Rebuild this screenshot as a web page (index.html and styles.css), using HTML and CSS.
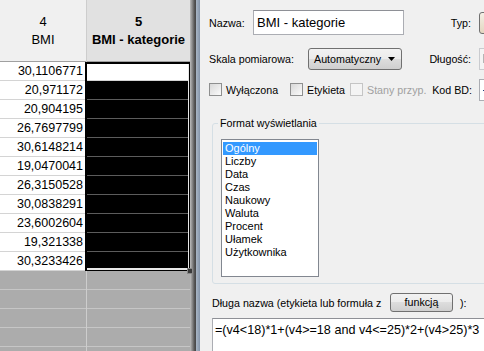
FILE: index.html
```html
<!DOCTYPE html>
<html lang="pl">
<head>
  <meta charset="UTF-8" />
  <meta name="viewport" content="width=device-width, initial-scale=1.0" />
  <title>Edytor zmiennych</title>
  <link rel="stylesheet" href="styles.css">
</head>
<body>
  <div class="app">
    <div class="sheet">
      <div class="col col-values">
        <div class="head"><span>4</span><span>BMI</span></div>
        <div class="cell">30,1106771</div>
        <div class="cell">20,971172</div>
        <div class="cell">20,904195</div>
        <div class="cell">26,7697799</div>
        <div class="cell">30,6148214</div>
        <div class="cell">19,0470041</div>
        <div class="cell">26,3150528</div>
        <div class="cell">30,0838291</div>
        <div class="cell">23,6002604</div>
        <div class="cell">19,321338</div>
        <div class="cell">30,3233426</div>
        <div class="cell empty"></div>
        <div class="cell empty"></div>
        <div class="cell empty"></div>
        <div class="cell empty"></div>
      </div>
      <div class="col col-sel">
        <div class="head head-active"><span>5</span><span>BMI - kategorie</span></div>
        <div class="selection">
          <div class="cell current"></div>
          <div class="cell dark"></div>
          <div class="cell dark"></div>
          <div class="cell dark"></div>
          <div class="cell dark"></div>
          <div class="cell dark"></div>
          <div class="cell dark"></div>
          <div class="cell dark"></div>
          <div class="cell dark"></div>
          <div class="cell dark"></div>
          <div class="cell dark"></div>
          <span class="handle"></span>
        </div>
        <div class="cell empty"></div>
        <div class="cell empty"></div>
        <div class="cell empty"></div>
        <div class="cell empty"></div>
      </div>
    </div>
    <div class="split"></div>

    <div class="dialog">
      <div class="row row-name">
        <span class="label label-name">Nazwa:</span>
        <div class="text-input">BMI - kategorie</div>
        <span class="label label-side">Typ:</span>
        <div class="side-box side-combo"></div>
      </div>

      <div class="row row-scale">
        <span class="label label-scale">Skala pomiarowa:</span>
        <div class="select">
          <span>Automatyczny</span>
          <svg width="7" height="4" viewBox="0 0 7 4"><path d="M0 0h7L3.5 4z" fill="#000"/></svg>
        </div>
        <span class="label label-side label-length">Długość:</span>
        <div class="side-box side-disabled"><i class="mark mark-grey"></i></div>
      </div>

      <div class="row row-checks">
        <label class="check check-off"><span class="box"></span>Wyłączona</label>
        <label class="check check-label"><span class="box"></span>Etykieta</label>
        <label class="check check-states disabled"><span class="box"></span>Stany przyp.</label>
        <span class="label label-code">Kod BD:</span>
        <div class="side-box side-text"><i class="mark mark-dash"></i></div>
      </div>

      <fieldset class="group">
        <legend>Format wyświetlania</legend>
        <ul class="listbox">
          <li class="selected">Ogólny</li>
          <li>Liczby</li>
          <li>Data</li>
          <li>Czas</li>
          <li>Naukowy</li>
          <li>Waluta</li>
          <li>Procent</li>
          <li>Ułamek</li>
          <li>Użytkownika</li>
        </ul>
      </fieldset>

      <div class="row row-long">
        <span class="label label-long">Długa nazwa (etykieta lub formuła z</span>
        <div class="btn">funkcją</div>
        <span class="label label-close">):</span>
      </div>

      <div class="formula">=(v4&lt;18)*1+(v4&gt;=18 and v4&lt;=25)*2+(v4&gt;25)*3</div>
    </div>
  </div>
</body>
</html>
```

FILE: styles.css
```css
* {
  box-sizing: border-box;
}
body {
  margin: 0;
  font-family: 'Liberation Sans', Arial, sans-serif;
  background-color: #f0f0f0;
  color: #000;
}
.app {
  display: flex;
  height: 351px;
  overflow: hidden;
}

/* arkusz danych */
.sheet {
  display: flex;
  width: 190px;
  flex-shrink: 0;
  background-color: #acacac;
}
.col-values {
  width: 87px;
  border-right: 1px solid #cdcdcd;
}
.col-sel {
  flex: 1;
}
.head {
  height: 62px;
  display: flex;
  flex-direction: column;
  justify-content: center;
  align-items: center;
  font-size: 13px;
  line-height: 18px;
  background-color: #f0f0f0;
  border-bottom: 1px solid #a0a0a0;
}
.head-active {
  background-color: #e1e1e1;
  font-weight: bold;
}
.cell {
  height: 19px;
  line-height: 18px;
  font-size: 12.5px;
  text-align: right;
  padding-right: 3px;
  background-color: #fff;
  border-bottom: 1px solid #d4d4d4;
}
.cell.empty {
  background-color: #acacac;
  border-bottom-color: #c6c6c6;
}
.selection {
  position: relative;
}
.selection::after {
  content: "";
  position: absolute;
  top: 0;
  right: 0;
  bottom: 0;
  left: -2px;
  border: 2px solid #000;
  border-right-width: 1px;
  border-bottom-width: 1px;
  box-shadow: inset -1px -2px 0 #e8e8e8;
}
.cell.dark {
  background-color: #000;
  border-bottom-color: #5c5c5c;
}
.handle {
  position: absolute;
  right: -3px;
  bottom: -3px;
  width: 6px;
  height: 6px;
  background-color: #3a3a3a;
  border: 1px solid #888;
  z-index: 1;
}
.split {
  width: 10px;
  flex-shrink: 0;
  background: linear-gradient(to right, #bdbdbd 0, #4a4a4a 5px, #4a4a4a 6px, #a9b6c5 6px, #8595aa 10px);
}

/* okno właściwości */
.dialog {
  flex: 1;
  overflow: hidden;
  padding: 10px 0 0 9px;
  font-size: 10.7px;
}
.row {
  display: flex;
  align-items: center;
}
.row > * {
  flex-shrink: 0;
}
.row-name {
  height: 25px;
}
.label-name {
  width: 44px;
}
.text-input {
  width: 151px;
  height: 25px;
  border: 1px solid #abadb3;
  border-top-color: #8e9096;
  background-color: #fff;
  font-size: 13px;
  line-height: 23px;
  padding: 0 3px;
}
.label-side {
  width: 67px;
  text-align: right;
}
.side-box {
  margin-left: 8px;
  width: 30px;
  height: 22px;
  border: 1px solid #abadb3;
  background-color: #fff;
  padding: 5px 0 0 3px;
}
.side-combo {
  border-color: #707070;
  border-radius: 3px;
  background: linear-gradient(#f4efe6, #e3d6c0);
}
.side-disabled {
  background-color: #f4f4f4;
  border-color: #c9cbcf;
}
.mark {
  display: block;
  width: 2px;
  height: 9px;
}
.mark-grey {
  background-color: #b4b4b4;
}
.mark-dash {
  width: 3px;
  height: 1px;
  margin-top: 5px;
  background-color: #1c3c7a;
}
.row-scale {
  margin-top: 13px;
  height: 22px;
}
.label-scale {
  width: 99px;
}
.select {
  width: 94px;
  height: 22px;
  display: flex;
  align-items: center;
  justify-content: space-between;
  padding: 0 6px 0 5px;
  border: 1px solid #707070;
  border-radius: 3px;
  background: linear-gradient(#f2f2f2 0, #ebebeb 50%, #dddddd 50%, #cfcfcf 100%);
}
.label-length {
  width: 69px;
}
.row-checks {
  margin-top: 13px;
  height: 13px;
}
.check {
  display: flex;
  align-items: center;
  gap: 4px;
}
.check-off {
  width: 81px;
}
.check-label {
  width: 60px;
}
.check-states {
  width: 78px;
}
.box {
  width: 13px;
  height: 13px;
  border: 1px solid #8e8f8f;
  background: linear-gradient(135deg, #d8d8d8, #fbfbfb);
}
.disabled {
  color: #a0a0a0;
}
.disabled .box {
  border-color: #c5c5c5;
  background: #f4f4f4;
}
.label-code {
  width: 44px;
  text-align: right;
}
.side-text {
  margin-left: 7px;
}

/* grupa formatu */
.group {
  margin: 21px 0 0 3px;
  width: 320px;
  padding: 9px 8px 6px 8px;
  border: 1px solid #d5dfe5;
  border-radius: 3px;
}
.group legend {
  padding: 0 2px;
  margin-left: -3px;
  line-height: 13px;
}
.listbox {
  list-style: none;
  margin: 0;
  width: 98px;
  height: 138px;
  padding: 2px 1px;
  border: 1px solid #828790;
  background-color: #fff;
  font-size: 11px;
}
.listbox li {
  height: 13px;
  line-height: 13px;
  padding-left: 2px;
}
.listbox li.selected {
  background-color: #3399ff;
  color: #fff;
}

/* długa nazwa */
.row-long {
  margin: 9px 0 0 3px;
  height: 19px;
}
.label-long {
  width: 178px;
}
.btn {
  width: 63px;
  height: 19px;
  line-height: 17px;
  text-align: center;
  border: 1px solid #707070;
  border-radius: 3px;
  background: linear-gradient(#f2f2f2 0, #ebebeb 50%, #dddddd 50%, #cfcfcf 100%);
}
.label-close {
  margin-left: 7px;
}
.formula {
  margin: 6px 0 0 3px;
  width: 320px;
  height: 50px;
  border: 1px solid #abadb3;
  border-top-color: #8e9096;
  background-color: #fff;
  font-size: 12.6px;
  line-height: 16px;
  padding: 3px 2px;
  white-space: nowrap;
}
```
